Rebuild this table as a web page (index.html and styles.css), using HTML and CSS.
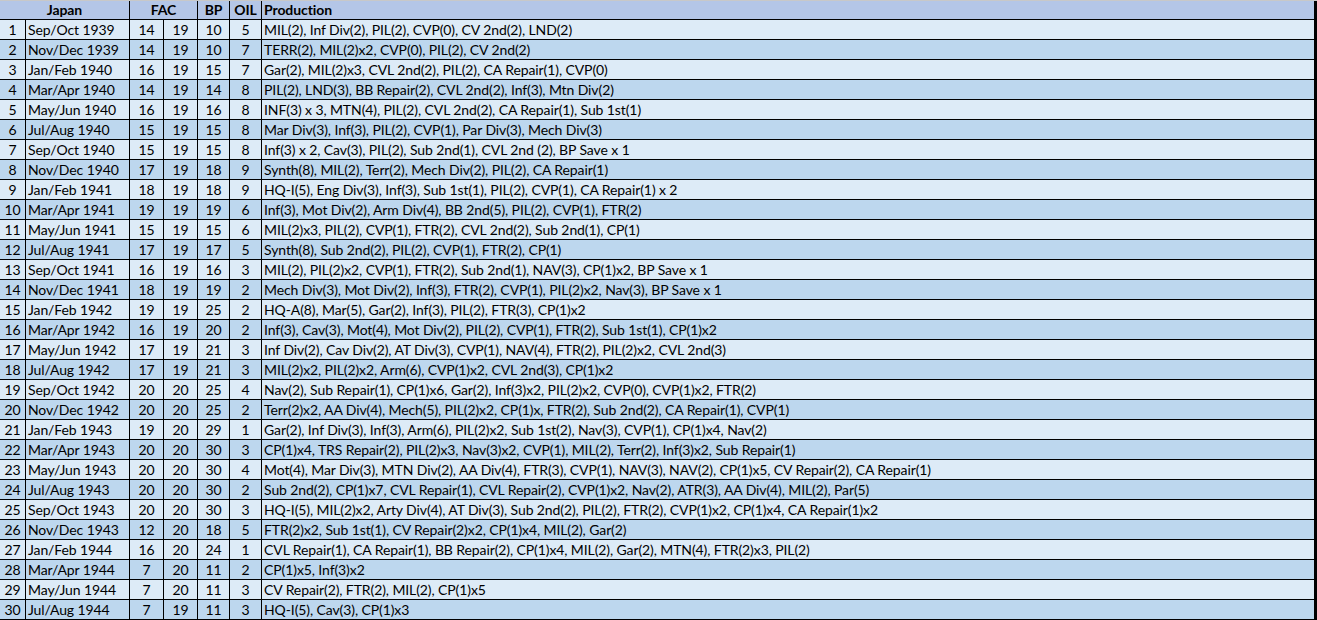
FILE: index.html
```html
<!DOCTYPE html>
<html>
<head>
<meta charset="utf-8">
<link rel="stylesheet" href="styles.css">
</head>
<body>
<table class="sheet">
<colgroup>
<col class="c-num"><col class="c-date"><col class="c-fac"><col class="c-fac"><col class="c-bp"><col class="c-oil"><col class="c-prod">
</colgroup>
<thead>
<tr class="head"><th colspan="2" class="ctr">Japan</th><th colspan="2" class="ctr">FAC</th><th class="ctr">BP</th><th class="ctr">OIL</th><th class="left last">Production</th></tr>
</thead>
<tbody>
<tr><td class="ctr">1</td><td>Sep/Oct 1939</td><td class="ctr">14</td><td class="ctr">19</td><td class="ctr">10</td><td class="ctr">5</td><td class="last">MIL(2), Inf Div(2), PIL(2), CVP(0), CV 2nd(2), LND(2)</td></tr>
<tr><td class="ctr">2</td><td>Nov/Dec 1939</td><td class="ctr">14</td><td class="ctr">19</td><td class="ctr">10</td><td class="ctr">7</td><td class="last">TERR(2), MIL(2)x2, CVP(0), PIL(2), CV 2nd(2)</td></tr>
<tr><td class="ctr">3</td><td>Jan/Feb 1940</td><td class="ctr">16</td><td class="ctr">19</td><td class="ctr">15</td><td class="ctr">7</td><td class="last">Gar(2), MIL(2)x3, CVL 2nd(2), PIL(2), CA Repair(1), CVP(0)</td></tr>
<tr><td class="ctr">4</td><td>Mar/Apr 1940</td><td class="ctr">14</td><td class="ctr">19</td><td class="ctr">14</td><td class="ctr">8</td><td class="last">PIL(2), LND(3), BB Repair(2), CVL 2nd(2), Inf(3), Mtn Div(2)</td></tr>
<tr><td class="ctr">5</td><td>May/Jun 1940</td><td class="ctr">16</td><td class="ctr">19</td><td class="ctr">16</td><td class="ctr">8</td><td class="last">INF(3) x 3, MTN(4), PIL(2), CVL 2nd(2), CA Repair(1), Sub 1st(1)</td></tr>
<tr><td class="ctr">6</td><td>Jul/Aug 1940</td><td class="ctr">15</td><td class="ctr">19</td><td class="ctr">15</td><td class="ctr">8</td><td class="last">Mar Div(3), Inf(3), PIL(2), CVP(1), Par Div(3), Mech Div(3)</td></tr>
<tr><td class="ctr">7</td><td>Sep/Oct 1940</td><td class="ctr">15</td><td class="ctr">19</td><td class="ctr">15</td><td class="ctr">8</td><td class="last">Inf(3) x 2, Cav(3), PIL(2), Sub 2nd(1), CVL 2nd (2), BP Save x 1</td></tr>
<tr><td class="ctr">8</td><td>Nov/Dec 1940</td><td class="ctr">17</td><td class="ctr">19</td><td class="ctr">18</td><td class="ctr">9</td><td class="last">Synth(8), MIL(2), Terr(2), Mech Div(2), PIL(2), CA Repair(1)</td></tr>
<tr><td class="ctr">9</td><td>Jan/Feb 1941</td><td class="ctr">18</td><td class="ctr">19</td><td class="ctr">18</td><td class="ctr">9</td><td class="last">HQ-I(5), Eng Div(3), Inf(3), Sub 1st(1), PIL(2), CVP(1), CA Repair(1) x 2</td></tr>
<tr><td class="ctr">10</td><td>Mar/Apr 1941</td><td class="ctr">19</td><td class="ctr">19</td><td class="ctr">19</td><td class="ctr">6</td><td class="last">Inf(3), Mot Div(2), Arm Div(4), BB 2nd(5), PIL(2), CVP(1), FTR(2)</td></tr>
<tr><td class="ctr">11</td><td>May/Jun 1941</td><td class="ctr">15</td><td class="ctr">19</td><td class="ctr">15</td><td class="ctr">6</td><td class="last">MIL(2)x3, PIL(2), CVP(1), FTR(2), CVL 2nd(2), Sub 2nd(1), CP(1)</td></tr>
<tr><td class="ctr">12</td><td>Jul/Aug 1941</td><td class="ctr">17</td><td class="ctr">19</td><td class="ctr">17</td><td class="ctr">5</td><td class="last">Synth(8), Sub 2nd(2), PIL(2), CVP(1), FTR(2), CP(1)</td></tr>
<tr><td class="ctr">13</td><td>Sep/Oct 1941</td><td class="ctr">16</td><td class="ctr">19</td><td class="ctr">16</td><td class="ctr">3</td><td class="last">MIL(2), PIL(2)x2, CVP(1), FTR(2), Sub 2nd(1), NAV(3), CP(1)x2, BP Save x 1</td></tr>
<tr><td class="ctr">14</td><td>Nov/Dec 1941</td><td class="ctr">18</td><td class="ctr">19</td><td class="ctr">19</td><td class="ctr">2</td><td class="last">Mech Div(3), Mot Div(2), Inf(3), FTR(2), CVP(1), PIL(2)x2, Nav(3), BP Save x 1</td></tr>
<tr><td class="ctr">15</td><td>Jan/Feb 1942</td><td class="ctr">19</td><td class="ctr">19</td><td class="ctr">25</td><td class="ctr">2</td><td class="last">HQ-A(8), Mar(5), Gar(2), Inf(3), PIL(2), FTR(3), CP(1)x2</td></tr>
<tr><td class="ctr">16</td><td>Mar/Apr 1942</td><td class="ctr">16</td><td class="ctr">19</td><td class="ctr">20</td><td class="ctr">2</td><td class="last">Inf(3), Cav(3), Mot(4), Mot Div(2), PIL(2), CVP(1), FTR(2), Sub 1st(1), CP(1)x2</td></tr>
<tr><td class="ctr">17</td><td>May/Jun 1942</td><td class="ctr">17</td><td class="ctr">19</td><td class="ctr">21</td><td class="ctr">3</td><td class="last">Inf Div(2), Cav Div(2), AT Div(3), CVP(1), NAV(4), FTR(2), PIL(2)x2, CVL 2nd(3)</td></tr>
<tr><td class="ctr">18</td><td>Jul/Aug 1942</td><td class="ctr">17</td><td class="ctr">19</td><td class="ctr">21</td><td class="ctr">3</td><td class="last">MIL(2)x2, PIL(2)x2, Arm(6), CVP(1)x2, CVL 2nd(3), CP(1)x2</td></tr>
<tr><td class="ctr">19</td><td>Sep/Oct 1942</td><td class="ctr">20</td><td class="ctr">20</td><td class="ctr">25</td><td class="ctr">4</td><td class="last">Nav(2), Sub Repair(1), CP(1)x6, Gar(2), Inf(3)x2, PIL(2)x2, CVP(0), CVP(1)x2, FTR(2)</td></tr>
<tr><td class="ctr">20</td><td>Nov/Dec 1942</td><td class="ctr">20</td><td class="ctr">20</td><td class="ctr">25</td><td class="ctr">2</td><td class="last">Terr(2)x2, AA Div(4), Mech(5), PIL(2)x2, CP(1)x, FTR(2), Sub 2nd(2), CA Repair(1), CVP(1)</td></tr>
<tr><td class="ctr">21</td><td>Jan/Feb 1943</td><td class="ctr">19</td><td class="ctr">20</td><td class="ctr">29</td><td class="ctr">1</td><td class="last">Gar(2), Inf Div(3), Inf(3), Arm(6), PIL(2)x2, Sub 1st(2), Nav(3), CVP(1), CP(1)x4, Nav(2)</td></tr>
<tr><td class="ctr">22</td><td>Mar/Apr 1943</td><td class="ctr">20</td><td class="ctr">20</td><td class="ctr">30</td><td class="ctr">3</td><td class="last">CP(1)x4, TRS Repair(2), PIL(2)x3, Nav(3)x2, CVP(1), MIL(2), Terr(2), Inf(3)x2, Sub Repair(1)</td></tr>
<tr><td class="ctr">23</td><td>May/Jun 1943</td><td class="ctr">20</td><td class="ctr">20</td><td class="ctr">30</td><td class="ctr">4</td><td class="last">Mot(4), Mar Div(3), MTN Div(2), AA Div(4), FTR(3), CVP(1), NAV(3), NAV(2), CP(1)x5, CV Repair(2), CA Repair(1)</td></tr>
<tr><td class="ctr">24</td><td>Jul/Aug 1943</td><td class="ctr">20</td><td class="ctr">20</td><td class="ctr">30</td><td class="ctr">2</td><td class="last">Sub 2nd(2), CP(1)x7, CVL Repair(1), CVL Repair(2), CVP(1)x2, Nav(2), ATR(3), AA Div(4), MIL(2), Par(5)</td></tr>
<tr><td class="ctr">25</td><td>Sep/Oct 1943</td><td class="ctr">20</td><td class="ctr">20</td><td class="ctr">30</td><td class="ctr">3</td><td class="last">HQ-I(5), MIL(2)x2, Arty Div(4), AT Div(3), Sub 2nd(2), PIL(2), FTR(2), CVP(1)x2, CP(1)x4, CA Repair(1)x2</td></tr>
<tr><td class="ctr">26</td><td>Nov/Dec 1943</td><td class="ctr">12</td><td class="ctr">20</td><td class="ctr">18</td><td class="ctr">5</td><td class="last">FTR(2)x2, Sub 1st(1), CV Repair(2)x2, CP(1)x4, MIL(2), Gar(2)</td></tr>
<tr><td class="ctr">27</td><td>Jan/Feb 1944</td><td class="ctr">16</td><td class="ctr">20</td><td class="ctr">24</td><td class="ctr">1</td><td class="last">CVL Repair(1), CA Repair(1), BB Repair(2), CP(1)x4, MIL(2), Gar(2), MTN(4), FTR(2)x3, PIL(2)</td></tr>
<tr><td class="ctr">28</td><td>Mar/Apr 1944</td><td class="ctr">7</td><td class="ctr">20</td><td class="ctr">11</td><td class="ctr">2</td><td class="last">CP(1)x5, Inf(3)x2</td></tr>
<tr><td class="ctr">29</td><td>May/Jun 1944</td><td class="ctr">7</td><td class="ctr">20</td><td class="ctr">11</td><td class="ctr">3</td><td class="last">CV Repair(2), FTR(2), MIL(2), CP(1)x5</td></tr>
<tr><td class="ctr">30</td><td>Jul/Aug 1944</td><td class="ctr">7</td><td class="ctr">19</td><td class="ctr">11</td><td class="ctr">3</td><td class="last">HQ-I(5), Cav(3), CP(1)x3</td></tr>
</tbody>
</table>
</body>
</html>
```
FILE: styles.css
```css
html, body {
  margin: 0;
  padding: 0;
  background: #ffffff;
}

.sheet {
  border-collapse: separate;
  border-spacing: 0;
  table-layout: fixed;
  width: 1317px;
  border-top: 1px solid #c8c8c8;
  font-family: Lato, "Liberation Sans", sans-serif;
  font-size: 14px;
  letter-spacing: -0.1px;
  color: #000000;
}

.c-num { width: 26px; }
.c-date { width: 104px; }
.c-fac { width: 34px; }
.c-bp { width: 32px; }
.c-oil { width: 32px; }
.c-prod { width: 1055px; }

.sheet th,
.sheet td {
  box-sizing: border-box;
  border-right: 1px solid #000000;
  border-bottom: 1px solid #000000;
  padding: 1px 0 0 2px;
  height: 20px;
  line-height: 18px;
  white-space: nowrap;
  overflow: hidden;
  text-align: left;
  vertical-align: middle;
  font-weight: normal;
}

.sheet th {
  height: 19px;
  padding-top: 0;
  font-weight: bold;
  background: #b4c6e7;
}

.sheet .ctr {
  text-align: center;
  padding-left: 0;
}

.sheet .last {
  border-right: 3px solid #000000;
}

.sheet tbody tr:nth-child(odd) td {
  background: #ddebf7;
}

.sheet tbody tr:nth-child(even) td {
  background: #bdd7ee;
}
```
